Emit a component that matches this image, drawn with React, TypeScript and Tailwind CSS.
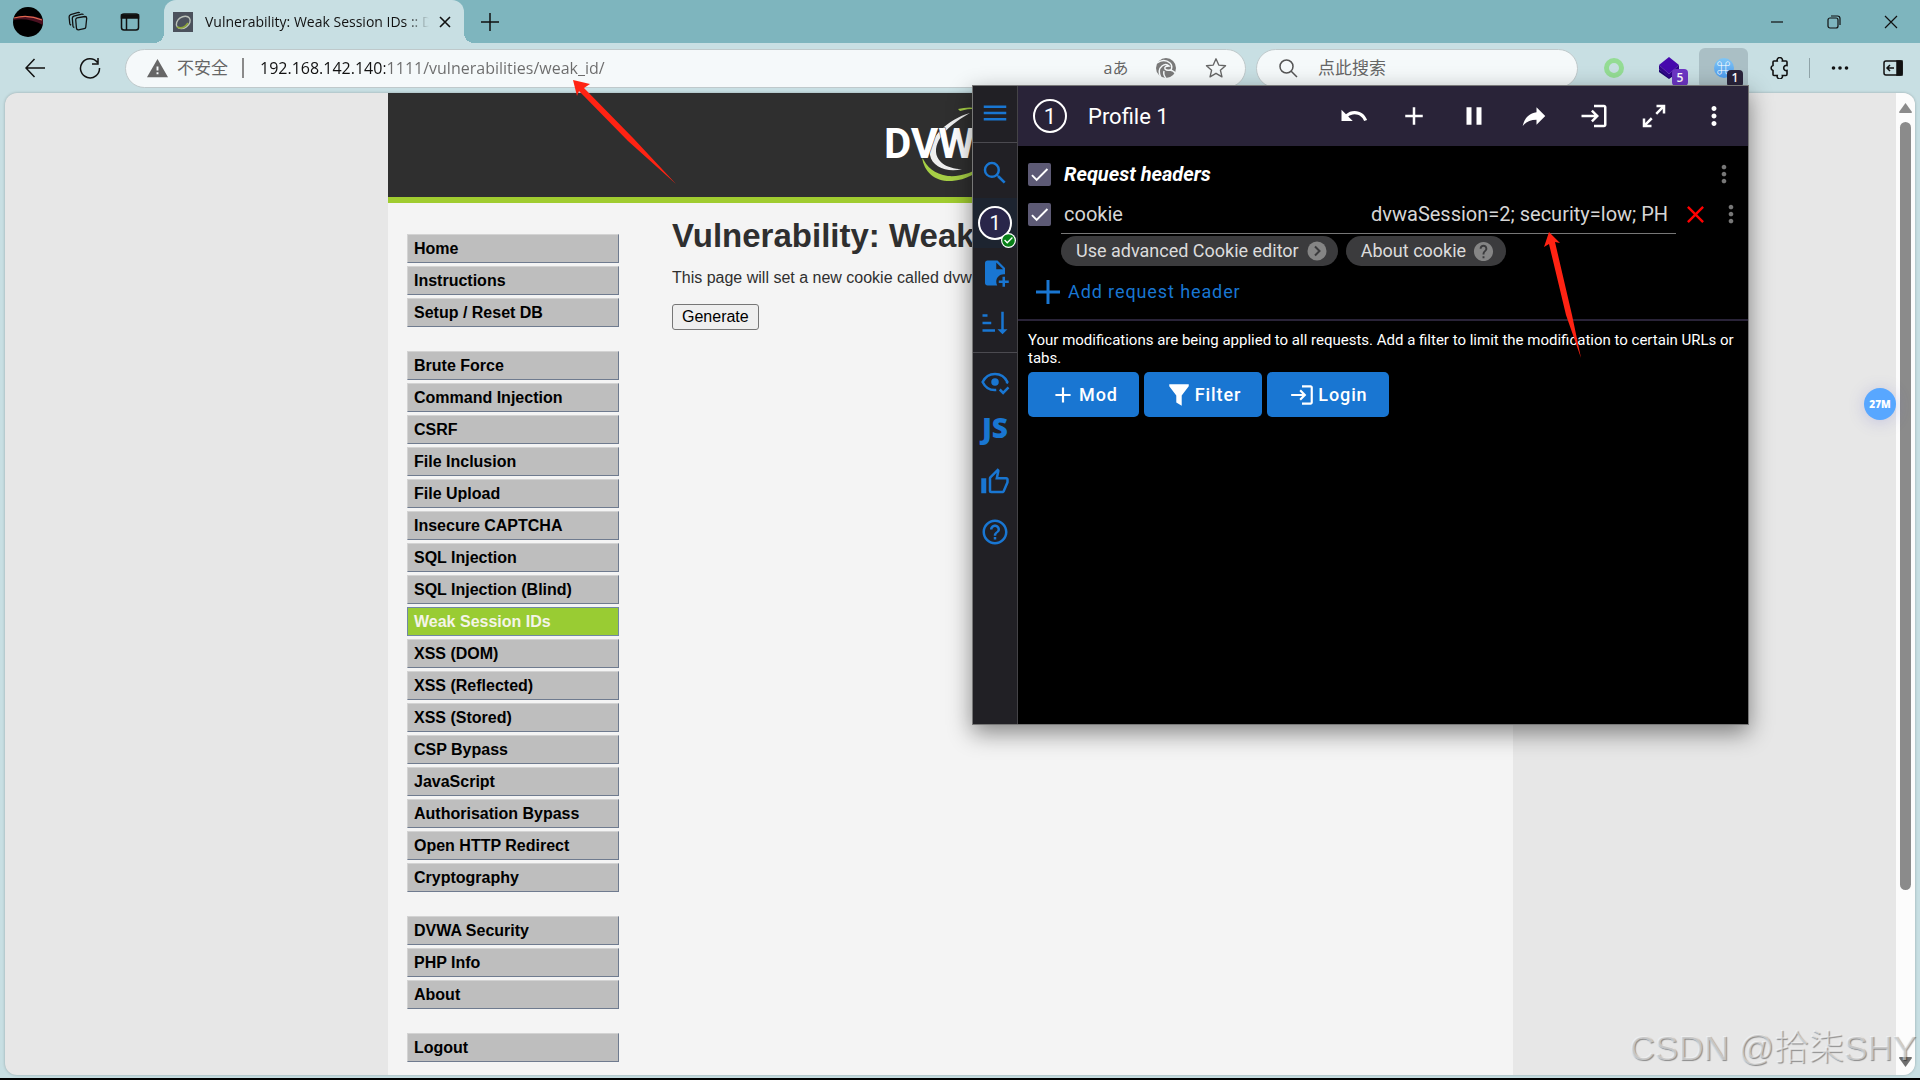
import type { ReactNode } from 'react'
import { clsx } from 'clsx'
import {
  MdAdd,
  MdCheck,
  MdCheckCircle,
  MdClose,
  MdHelp,
  MdHelpOutline,
  MdLogin,
  MdMenu,
  MdMoreVert,
  MdPause,
  MdSearch,
  MdUndo,
  MdWarning,
} from 'react-icons/md'

const MENU = [
  ['Home', 'Instructions', 'Setup / Reset DB'],
  [
    'Brute Force',
    'Command Injection',
    'CSRF',
    'File Inclusion',
    'File Upload',
    'Insecure CAPTCHA',
    'SQL Injection',
    'SQL Injection (Blind)',
    'Weak Session IDs',
    'XSS (DOM)',
    'XSS (Reflected)',
    'XSS (Stored)',
    'CSP Bypass',
    'JavaScript',
    'Authorisation Bypass',
    'Open HTTP Redirect',
    'Cryptography',
  ],
  ['DVWA Security', 'PHP Info', 'About'],
  ['Logout'],
]

const PATHS = {
  share: 'M21,12L14,5V9C7,10 4,15 3,20C5.5,16.5 9,14.9 14,14.9V19L21,12Z',
  expand:
    'M10,21V19H6.41L10.91,14.5L9.5,13.09L5,17.59V14H3V21H10M14.5,10.91L19,6.41V10H21V3H14V5H17.59L13.09,9.5L14.5,10.91Z',
  filePlus:
    'M14 2H6C4.89 2 4 2.89 4 4V20C4 21.11 4.89 22 6 22H13.81C13.28 21.09 13 20.05 13 19C13 15.69 15.69 13 19 13C19.34 13 19.67 13.03 20 13.08V8L14 2M13 9V3.5L18.5 9H13M23 20H20V23H18V20H15V18H18V15H20V18H23V20Z',
  sort: 'M19 17H22L18 21L14 17H17V3H19M2 17H12V19H2M6 5V7H2V5M2 11H9V13H2V11Z',
  thumb:
    'M5,9V21H1V9H5M9,21A2,2 0 0,1 7,19V9C7,8.45 7.22,7.95 7.59,7.59L14.17,1L15.23,2.06C15.5,2.33 15.67,2.7 15.67,3.11L15.64,3.43L14.69,8H21C22.11,8 23,8.9 23,10V12C23,12.26 22.95,12.5 22.86,12.73L19.84,19.78C19.54,20.5 18.83,21 18,21H9M9,19H18.03L21,12V10H12.21L13.34,4.68L9,9.03V19Z',
  filter: 'M3 2H21V4L14.5 12.5V22L9.5 19V12.5L3 4Z',
}

function PathIcon({ name, size = 30 }: { name: keyof typeof PATHS; size?: number }) {
  return (
    <svg width={size} height={size} viewBox="0 0 24 24" fill="currentColor">
      <path d={PATHS[name]} />
    </svg>
  )
}

function EyeCheckIcon() {
  return (
    <svg width="30" height="30" viewBox="0 0 24 24" fill="none" stroke="currentColor" strokeWidth="2">
      <path d="M13 18.4C7.800 18.900 4 16 2.100 12C4 8 7.700 5.500 12 5.500C16.300 5.500 20 8 21.900 12L21.300 13.200" />
      <circle cx="12" cy="12" r="3" fill="currentColor" stroke="none" />
      <path d="M15.800 18L18.500 20.700L22.800 16.300" />
    </svg>
  )
}

function IconButton({ label, className, children }: { label: string; className?: string; children: ReactNode }) {
  return (
    <button type="button" aria-label={label} className={clsx('flex shrink-0 items-center justify-center', className)}>
      {children}
    </button>
  )
}

function TabStrip() {
  return (
    <header className="flex h-[43px] shrink-0 items-center bg-[#7eb5be] text-[#111]">
      <IconButton label="Profile" className="ml-[13px] size-[30px] overflow-hidden rounded-full bg-black">
        <svg width="30" height="30" viewBox="0 0 30 30" fill="none">
          <path d="M0 12Q15 6 30 12V18Q15 10 0 13Z" fill="#4a1020" />
          <path d="M1 11Q15 7 29 13" stroke="#e0664f" strokeWidth="1.200" />
        </svg>
      </IconButton>
      <IconButton label="Workspaces" className="ml-4 w-[38px]">
        <svg width="22" height="22" viewBox="0 0 24 24" fill="none" stroke="currentColor" strokeWidth="1.400">
          <path d="M11 7.500L19.500 6Q21.500 6 21.500 8L20.500 17.500Q20.300 19 18.700 19.300L12.500 20.500Q10.500 20.600 10.300 18.700L9.500 9.500Q9.500 8 11 7.500Z" />
          <path d="M8 18Q6.800 17.800 6.500 16.500L5.800 8Q5.800 6.200 7.500 5.500L16 3.500Q17.500 3.300 18 4" />
          <path d="M4.500 15.500Q3.200 15 3 13.500L2.300 6.500Q2.200 4.700 4 4L11.500 1.800Q13.200 1.400 14 2" />
        </svg>
      </IconButton>
      <IconButton label="Tab actions" className="ml-4 w-[34px]">
        <svg width="20" height="20" viewBox="0 0 20 20" fill="none" stroke="currentColor" strokeWidth="1.500">
          <rect x="1.500" y="2" width="17" height="16" rx="2.500" />
          <path d="M1.500 3H18.500V6H1.500Z" fill="currentColor" />
          <path d="M6.500 6V18" />
        </svg>
      </IconButton>
      <div className="relative ml-[17px] flex h-full w-[300px] items-center rounded-t-xl bg-[#c8dfe3] pl-[9px]">
        <div className="absolute bottom-0 -left-2.5 size-2.5 bg-[radial-gradient(circle_at_0_0,transparent_10px,#c8dfe3_10px)]" />
        <div className="absolute -right-2.5 bottom-0 size-2.5 bg-[radial-gradient(circle_at_100%_0,transparent_10px,#c8dfe3_10px)]" />
        <svg width="20" height="20" viewBox="0 0 20 20" fill="none">
          <rect width="20" height="20" fill="#4b515c" />
          <ellipse cx="10" cy="10.500" rx="7.500" ry="5.500" transform="rotate(-35 10 10)" stroke="#b9c0b8" strokeWidth="1.400" />
          <path d="M4 15Q10 18 15 11" stroke="#8fa73a" strokeWidth="1.600" />
        </svg>
        <span className="ml-3 w-[224px] overflow-hidden bg-linear-to-r from-[#111] from-90% to-transparent bg-clip-text text-sm whitespace-nowrap text-transparent">
          Vulnerability: Weak Session IDs :: D
        </span>
        <IconButton label="Close tab" className="ml-1 size-6">
          <svg width="12" height="12" viewBox="0 0 12 12" stroke="currentColor" strokeWidth="1.600">
            <path d="M1 1L11 11M11 1L1 11" />
          </svg>
        </IconButton>
      </div>
      <IconButton label="New tab" className="ml-2 size-9">
        <svg width="18" height="18" viewBox="0 0 18 18" stroke="currentColor" strokeWidth="1.500">
          <path d="M9 0V18M0 9H18" />
        </svg>
      </IconButton>
      <div className="ml-auto flex">
        <IconButton label="Minimize" className="h-[43px] w-[57px]">
          <svg width="12" height="12" viewBox="0 0 12 12" stroke="currentColor" strokeWidth="1.200">
            <path d="M0 6H12" />
          </svg>
        </IconButton>
        <IconButton label="Restore" className="h-[43px] w-[57px]">
          <svg width="14" height="14" viewBox="0 0 14 14" fill="none" stroke="currentColor" strokeWidth="1.200">
            <rect x="1" y="3" width="10" height="10" rx="2" />
            <path d="M4 1H10.500Q13 1 13 3.500V10" />
          </svg>
        </IconButton>
        <IconButton label="Close" className="h-[43px] w-[58px]">
          <svg width="14" height="14" viewBox="0 0 14 14" stroke="currentColor" strokeWidth="1.200">
            <path d="M1 1L13 13M13 1L1 13" />
          </svg>
        </IconButton>
      </div>
    </header>
  )
}

function Toolbar() {
  return (
    <div className="flex h-[50px] shrink-0 items-center text-[#111]">
      <IconButton label="Back" className="ml-[15px] size-10">
        <svg width="20" height="20" viewBox="0 0 20 20" fill="none" stroke="currentColor" strokeWidth="1.500">
          <path d="M20 10H1M9.500 1L1 10L9.500 19" />
        </svg>
      </IconButton>
      <IconButton label="Reload" className="ml-[15px] size-10">
        <svg width="22" height="22" viewBox="0 0 22 22" fill="none" stroke="currentColor" strokeWidth="1.500">
          <path d="M20.500 11A9.500 9.500 0 1 1 18.500 5.500M19 1V7H13" />
        </svg>
      </IconButton>
      <div className="ml-[15px] flex h-[39px] flex-1 items-center rounded-full border border-[#bfc9cb] bg-[#f5f9fa] pr-1 pl-5 text-[#666]">
        <MdWarning size={23} />
        <span className="ml-2 text-[17px]">不安全</span>
        <span className="mr-3 ml-3.5 h-5 w-0.5 bg-[#8a8a8a]" />
        <input
          type="text"
          aria-label="Address"
          defaultValue="192.168.142.140:1111/vulnerabilities/weak_id/"
          className="ml-1 min-w-0 flex-1 bg-[linear-gradient(to_right,#111_125px,#6b6b6b_125px)] bg-clip-text text-base text-transparent outline-none"
        />
        <IconButton label="Translate" className="w-[50px] text-base">
          aあ
        </IconButton>
        <IconButton label="Assistant" className="w-[50px]">
          <svg width="22" height="22" viewBox="0 0 22 22" fill="none">
            <circle cx="11" cy="11" r="10" fill="#7a7a7a" />
            <path d="M2 6Q9 1 15 6Q18 9 16 13M6 21Q2 13 7 9Q11 6 14 9Q9 9 10 12Q12 14 15 13Q19 14 20 16M11 21Q8 18 9 14" stroke="#f5f9fa" strokeWidth="1.500" />
          </svg>
        </IconButton>
        <IconButton label="Favourite" className="w-[50px]">
          <svg width="22" height="22" viewBox="0 0 24 24" fill="none" stroke="currentColor" strokeWidth="1.500" strokeLinejoin="round">
            <path d="M12 2L15 8.800L22.400 9.500L16.800 14.400L18.500 21.700L12 17.800L5.500 21.700L7.200 14.400L1.600 9.500L9 8.800Z" />
          </svg>
        </IconButton>
      </div>
      <label className="ml-2.5 flex h-[39px] w-[322px] items-center gap-5 rounded-full border border-[#bfc9cb] bg-[#f5f9fa] pl-[22px] text-[#555]">
        <svg width="19" height="19" viewBox="0 0 19 19" fill="none" stroke="currentColor" strokeWidth="1.500">
          <circle cx="7.500" cy="7.500" r="6.500" />
          <path d="M12 12L18 18" />
        </svg>
        <input
          type="text"
          aria-label="Search"
          placeholder="点此搜索"
          className="min-w-0 flex-1 bg-transparent text-[17px] outline-none placeholder:text-[#666]"
        />
      </label>
      <IconButton label="Extension" className="ml-4 w-10">
        <svg width="20" height="20" viewBox="0 0 20 20" fill="none">
          <circle cx="10" cy="10" r="7.500" stroke="#94dc94" strokeWidth="5" />
        </svg>
      </IconButton>
      <button type="button" className="relative ml-4 flex w-[38px] justify-center" aria-label="Wappalyzer">
        <svg width="22" height="22" viewBox="0 0 22 22">
          <path d="M1 12L11 20L21 12V15L11 22L1 15Z" fill="#1f0673" />
          <path d="M11 0L21 8L11 17L1 8Z" fill="#4608ad" />
          <path d="M1 8L11 17L21 8V12L11 21L1 12Z" fill="#32058c" />
        </svg>
        <span className="absolute top-3 left-[22px] flex h-[17px] w-4 items-center justify-center rounded-sm bg-[#6c35c4] text-xs font-semibold text-white">
          5
        </span>
      </button>
      <button
        type="button"
        className="relative ml-[11px] flex h-[41px] w-[49px] items-center justify-center rounded-md bg-[#aabfc5]"
        aria-label="ModHeader"
      >
        <span className="flex size-5 items-center justify-center rounded-full bg-linear-to-b from-[#80c6f5] to-[#4d9bee] text-sm font-semibold text-white">
          ⌘
        </span>
        <span className="absolute bottom-0.5 left-7 flex h-[17px] w-4 items-center justify-center rounded-sm bg-[#29233a] text-xs font-semibold text-white">
          1
        </span>
      </button>
      <IconButton label="Extensions" className="ml-3 w-10">
        <svg width="22" height="22" viewBox="0 0 22 22" fill="none" stroke="currentColor" strokeWidth="1.600">
          <path d="M5 4H8.200A2.700 2.700 0 1 1 13.400 4H17Q18 4 18 5V8.500A2.600 2.600 0 1 0 18 13.500V17Q18 18.500 17 18.500H13.400A2.700 2.700 0 1 1 8.200 18.500H5Q4 18.500 4 17.500V13.500A2.600 2.600 0 0 1 4 8.500V5Q4 4 5 4Z" />
        </svg>
      </IconButton>
      <span className="ml-[9px] h-5 w-px bg-[#8fa3a8]" />
      <IconButton label="Settings and more" className="ml-2.5 w-10">
        <svg width="18" height="6" viewBox="0 0 18 6" fill="currentColor">
          <circle cx="2.500" cy="3" r="1.800" />
          <circle cx="9" cy="3" r="1.800" />
          <circle cx="15.500" cy="3" r="1.800" />
        </svg>
      </IconButton>
      <IconButton label="Sidebar" className="mr-[7px] ml-[13px] w-10">
        <svg width="20" height="16" viewBox="0 0 20 16" fill="none" stroke="currentColor" strokeWidth="1.500">
          <rect x="1" y="1" width="18" height="14" rx="2" />
          <path d="M14 1H19V15H14Z" fill="currentColor" />
          <path d="M11 8H4M7 5L4 8L7 11" />
        </svg>
      </IconButton>
    </div>
  )
}

function Logo() {
  return (
    <svg width="130" height="80" viewBox="0 0 130 80" fill="none">
      <path d="M84 8C62 14 42 33 44 50C46 62 62 68 76 64C60 64 50 56 50 46C50 32 66 18 84 8Z" fill="#eee" />
      <path d="M36 52C38 68 50 77 66 76C80 75 92 68 100 58C88 68 74 72 62 71C48 69 41 62 36 52Z" fill="#a6cf45" />
      <path d="M72 4Q84 1 94 4Q84 3 74 6Z" fill="#a6cf45" />
      <text x="-2" y="53" fill="#fff" stroke="#2f2f2f" strokeWidth="1" paintOrder="stroke" className="font-['Roboto',sans-serif] text-[42px] font-bold">
        DVWA
      </text>
    </svg>
  )
}

function DvwaPage() {
  return (
    <div className="mx-auto min-h-full w-[1125px] bg-[#f4f4f4] font-['Liberation_Sans',sans-serif] text-[#2f2f2f]">
      <div className="flex h-[110px] justify-center border-b-[6px] border-[#a0cc30] bg-[#2f2f2f] pt-3">
        <Logo />
      </div>
      <div className="flex gap-[53px] pt-[31px] pl-[19px]">
        <nav className="flex w-[212px] flex-col gap-6">
          {MENU.map((group) => (
            <ul key={group[0]} className="flex flex-col gap-[3px]">
              {group.map((item) => (
                <li key={item}>
                  <a
                    href="#"
                    className={clsx(
                      'flex h-[29px] items-center border pl-1.5 text-base font-bold',
                      item === 'Weak Session IDs'
                        ? 'border-[#7188a4] bg-[#99cc33] text-[#f4f4e8]'
                        : 'border-t-[#d3d3d3] border-r-[#6f7b8f] border-b-[#6f7b8f] border-l-[#d3d3d3] bg-[#bebebe] text-black',
                    )}
                  >
                    {item}
                  </a>
                </li>
              ))}
            </ul>
          ))}
        </nav>
        <main className="flex-1">
          <h1 className="-mt-4 text-[33px] leading-9 font-bold">Vulnerability: Weak Session IDs</h1>
          <p className="mt-3 text-base leading-6">
            This page will set a new cookie called dvwaSession each time the button is clicked.
          </p>
          <button
            type="button"
            className="mt-3.5 h-[26px] rounded-[3px] border border-[#767676] bg-[#efefef] px-[9px] text-base leading-none text-black"
          >
            Generate
          </button>
        </main>
      </div>
    </div>
  )
}

function Scrollbar() {
  return (
    <div className="flex w-[19px] shrink-0 flex-col items-center bg-[#fcfcfc] pt-2.5">
      <svg width="13" height="10" viewBox="0 0 13 10" fill="#8b8b8b">
        <path d="M6.500 0L13 9Q13 10 12 10H1Q0 10 0 9Z" />
      </svg>
      <div className="mt-[9px] h-[79%] w-[11px] rounded-full bg-[#8b8b8b]" />
      <svg className="mt-auto mb-2" width="13" height="10" viewBox="0 0 13 10" fill="#6f6f6f">
        <path d="M6.500 10L13 1Q13 0 12 0H1Q0 0 0 1Z" />
      </svg>
    </div>
  )
}

function Checkbox({ label }: { label: string }) {
  return (
    <label className="grid shrink-0 place-items-center">
      <input
        type="checkbox"
        defaultChecked
        aria-label={label}
        className="col-start-1 row-start-1 size-[23px] appearance-none rounded-xs bg-[#5d5a75]"
      />
      <MdCheck size={23} className="pointer-events-none col-start-1 row-start-1 text-white" />
    </label>
  )
}

const SIDE_SLOT = 'h-[50px] w-full'

function PopupSidebar() {
  return (
    <aside className="flex w-[45px] shrink-0 flex-col border-r border-[#444347] bg-[#212025] text-[#1976d2]">
      <div className="border-b border-[#4b4a50]">
        <IconButton label="Menu" className="h-14 w-full pb-0.5">
          <MdMenu size={30} />
        </IconButton>
      </div>
      <div className="border-b border-[#4b4a50] pt-[5px] pb-1">
        <IconButton label="Search" className={SIDE_SLOT}>
          <MdSearch size={30} />
        </IconButton>
        <div className="relative">
          <IconButton label="Profile 1" className={clsx(SIDE_SLOT, 'bg-[#1d2430]')}>
            <span className="flex size-[34px] items-center justify-center rounded-full border-2 border-white bg-[#29264a] text-xl text-white">
              1
            </span>
          </IconButton>
          <MdCheckCircle
            size={15}
            className="absolute right-px bottom-0 rounded-full bg-white text-[#078017]"
          />
        </div>
        <IconButton label="New profile" className={SIDE_SLOT}>
          <PathIcon name="filePlus" />
        </IconButton>
        <IconButton label="Sort profiles" className={SIDE_SLOT}>
          <PathIcon name="sort" />
        </IconButton>
      </div>
      <div className="pt-1">
        <IconButton label="Watch" className={SIDE_SLOT}>
          <EyeCheckIcon />
        </IconButton>
        <IconButton
          label="JavaScript"
          className={clsx(SIDE_SLOT, "pb-2.5 font-['Open_Sans',sans-serif] text-[28px] leading-none font-extrabold")}
        >
          JS
        </IconButton>
        <IconButton label="Like" className={SIDE_SLOT}>
          <PathIcon name="thumb" />
        </IconButton>
        <IconButton label="Help" className={SIDE_SLOT}>
          <MdHelpOutline size={30} />
        </IconButton>
      </div>
    </aside>
  )
}

function Popup() {
  const tools: [string, ReactNode][] = [
    ['Undo', <MdUndo size={30} />],
    ['Add', <MdAdd size={30} />],
    ['Pause', <MdPause size={30} />],
    ['Share', <PathIcon name="share" />],
    ['Sign in', <MdLogin size={30} />],
    ['Expand', <PathIcon name="expand" />],
    ['More', <MdMoreVert size={30} />],
  ]
  const actions: [string, ReactNode][] = [
    ['Mod', <MdAdd size={26} />],
    ['Filter', <PathIcon name="filter" size={26} />],
    ['Login', <MdLogin size={26} />],
  ]

  return (
    <section className="absolute top-[85px] right-[171px] flex h-[640px] w-[777px] border border-[#777] bg-black font-['Roboto',sans-serif] text-white shadow-[0_8px_22px_rgba(0,0,0,0.45)]">
      <PopupSidebar />
      <div className="flex-1">
        <div className="flex h-[60px] items-center bg-[#292338] pr-1 pl-[15px]">
          <span className="flex size-[34px] items-center justify-center rounded-full border-2 border-white text-[22px]">
            1
          </span>
          <h2 className="ml-[21px] flex-1 text-[22px]">Profile 1</h2>
          {tools.map(([label, icon]) => (
            <IconButton key={label} label={label} className="size-[60px]">
              {icon}
            </IconButton>
          ))}
        </div>
        <div className="border-b-2 border-[#292338] pt-2 pb-1.5 pl-2.5">
          <div className="flex h-10 items-center pr-2.5">
            <Checkbox label="Enable request headers" />
            <h3 className="ml-[13px] flex-1 text-xl font-bold italic">Request headers</h3>
            <MdMoreVert size={28} className="text-[#777]" />
          </div>
          <div className="flex h-10 items-center">
            <Checkbox label="Enable cookie header" />
            <div className="ml-2.5 flex h-full flex-1 items-center border-b border-[#777] text-[#d6d6d6]">
              <input
                type="text"
                aria-label="Header name"
                defaultValue="cookie"
                className="w-[307px] bg-transparent pl-[3px] text-xl outline-none"
              />
              <input
                type="text"
                aria-label="Header value"
                defaultValue="dvwaSession=2; security=low; PH"
                className="min-w-0 flex-1 bg-transparent pl-[3px] text-xl outline-none"
              />
            </div>
            <IconButton label="Remove header" className="mr-[3px] w-[38px] text-[#ff0000]">
              <MdClose size={29} />
            </IconButton>
            <MdMoreVert size={28} className="mr-[3px] text-[#777]" />
          </div>
          <div className="mt-0.5 ml-[33px] flex gap-2 text-lg text-[#dcdcdc]">
            <button type="button" className="flex h-[30px] items-center gap-2 rounded-full bg-[#3b3b3d] pr-[11px] pl-[15px]">
              Use advanced Cookie editor
              <svg width="20" height="20" viewBox="0 0 20 20" fill="none">
                <circle cx="10" cy="10" r="9.500" fill="#858585" />
                <path d="M8 5.500L12.500 10L8 14.500" stroke="#3b3b3d" strokeWidth="2" />
              </svg>
            </button>
            <button type="button" className="flex h-[30px] items-center gap-1.5 rounded-full bg-[#3b3b3d] pr-[11px] pl-[15px]">
              About cookie
              <MdHelp size={23} className="text-[#858585]" />
            </button>
          </div>
          <button type="button" className="mt-1 ml-1 flex h-[43px] items-center gap-1 text-lg tracking-wider text-[#1976d2]">
            <svg width="32" height="24" viewBox="0 0 32 24" stroke="currentColor" strokeWidth="3">
              <path d="M16 0V24M4 12H28" />
            </svg>
            Add request header
          </button>
        </div>
        <div className="px-2.5 pt-2.5">
          <p className="text-[15px] leading-[18px]">
            Your modifications are being applied to all requests. Add a filter to limit the modification to certain URLs or
            tabs.
          </p>
          <div className="mt-[5px] flex gap-[5px]">
            {actions.map(([label, icon]) => (
              <button
                key={label}
                type="button"
                className="flex h-[45px] items-center gap-[3px] rounded-[5px] bg-[#1976d2] pr-[21px] pl-[22px] text-lg font-medium tracking-wider"
              >
                {icon}
                {label}
              </button>
            ))}
          </div>
        </div>
      </div>
    </section>
  )
}

// hand-drawn style red pointers laid over the window
function Pointers() {
  return (
    <svg className="pointer-events-none absolute top-0 left-0" width="1600" height="400" viewBox="0 0 1600 400" fill="#ff2313">
      <path d="M573 80L590 84L584 88L634 139L676 184L628 141L579 91L577 96Z" />
      <path d="M1549 232L1560 243L1555 242L1572 315L1581 358L1566 315L1549 244L1544 247Z" />
    </svg>
  )
}

export default function App() {
  return (
    <div className="relative flex h-screen flex-col overflow-hidden border-b-2 border-black bg-[#c8dfe3] font-['Open_Sans','Noto_Sans_CJK_SC',sans-serif]">
      <TabStrip />
      <Toolbar />
      <div className="mr-[5px] mb-[3px] ml-[5px] flex min-h-0 flex-1 overflow-hidden rounded-xl bg-[#e7e7e7] shadow-[0_0_3px_rgba(0,0,0,0.25)]">
        <div className="min-w-0 flex-1 overflow-hidden">
          <DvwaPage />
        </div>
        <Scrollbar />
      </div>
      <Popup />
      <button
        type="button"
        className="absolute top-[388px] right-6 size-8 rounded-full bg-[#58a7ff] text-[10px] font-extrabold text-white shadow-[0_2px_16px_rgba(90,90,200,0.25)]"
      >
        27M
      </button>
      <Pointers />
      <span className="pointer-events-none absolute right-1 bottom-1 font-['Liberation_Sans','Noto_Sans_CJK_SC',sans-serif] text-[35px] font-light whitespace-nowrap text-white/50 [text-shadow:1px_1px_1px_rgba(0,0,0,0.4)]">
        CSDN @拾柒SHY
      </span>
    </div>
  )
}
